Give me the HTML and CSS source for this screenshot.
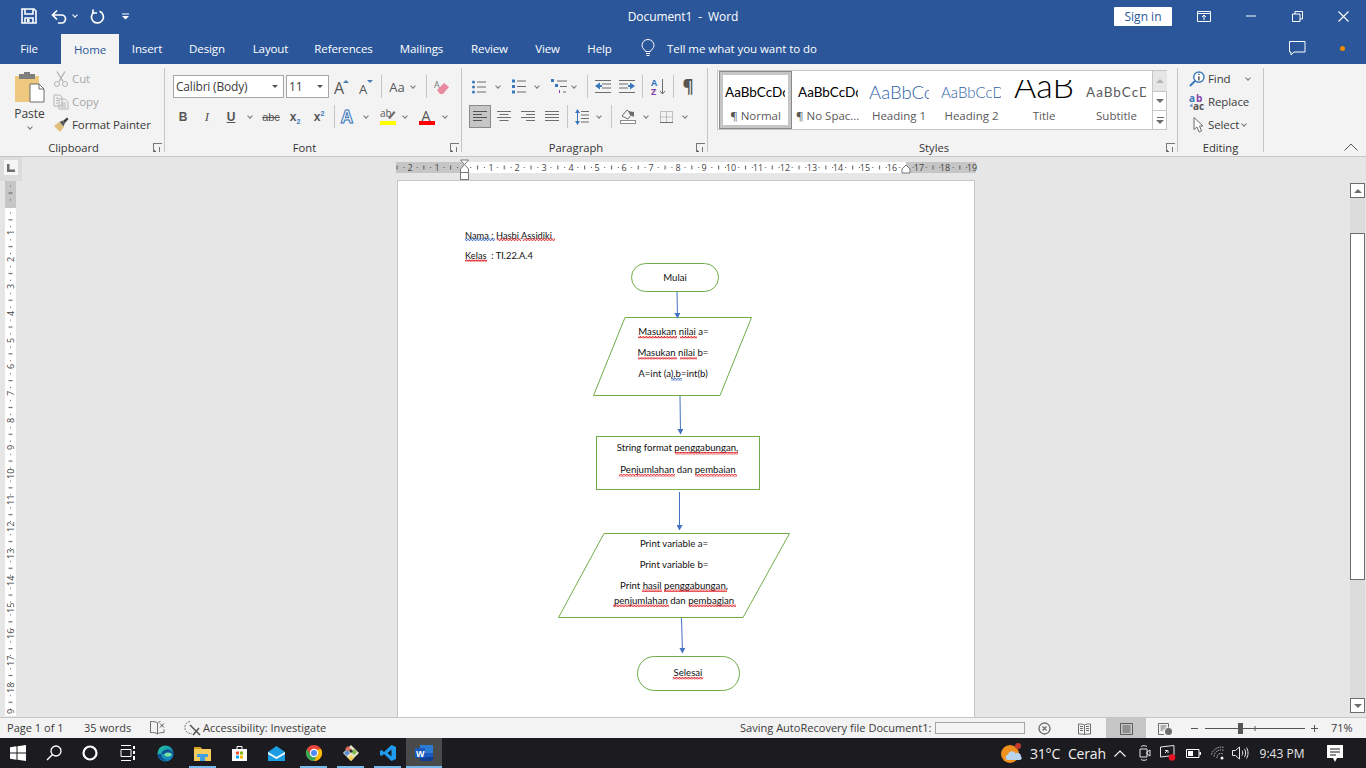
FILE: index.html
```html
<!DOCTYPE html>
<html lang="en">
<head>
    <meta charset="UTF-8">
    <meta name="viewport" content="width=device-width, initial-scale=1.0">
    <title>Document1 - Word</title>
    <link rel="stylesheet" href="styles.css">
</head>
<body>
<div class="app">

    <!-- Title bar -->
    <header class="titlebar">
        <div class="qat">
            <svg class="q-save" width="16" height="16" viewBox="0 0 16 16"><path d="M1 1h12l2 2v12H1z M4 1.5v4.5h8v-4.5 M4 15v-5h8v5" fill="none" stroke="#fff" stroke-width="1.6"/><rect x="6" y="11" width="2.5" height="3" fill="#fff"/></svg>
            <svg class="q-undo" width="16" height="15" viewBox="0 0 16 15"><path d="M2 6h8.5a4 4 0 0 1 0 8H7 M6 1.5L1.5 6 6 10.5" fill="none" stroke="#fff" stroke-width="1.7"/></svg>
            <span class="chev chev-w q-chev"></span>
            <svg class="q-redo" width="15" height="15" viewBox="0 0 15 15"><path d="M9.5 2.3A6 6 0 1 1 4 3 M3 .5V4h4" fill="none" stroke="#fff" stroke-width="1.7"/></svg>
            <svg class="q-more" width="7" height="7" viewBox="0 0 7 7"><path d="M0 .5h7v1H0z M0 3h7L3.5 6.5z" fill="#fff"/></svg>
        </div>
        <div class="doc-title">Document1&nbsp; -&nbsp; Word</div>
        <div class="win-ctrl">
            <button class="signin" type="button">Sign in</button>
            <svg class="w-display" width="14" height="11" viewBox="0 0 14 11"><path d="M.5.5h13v10H.5z M.5 2.5h13 M7 9V4 M5 6l2-2 2 2" fill="none" stroke="#fff"/></svg>
            <svg class="w-min" width="10" height="2" viewBox="0 0 10 2"><path d="M0 1h10" stroke="#fff"/></svg>
            <svg class="w-max" width="11" height="11" viewBox="0 0 11 11"><path d="M.5 3h7.5v7.5H.5z M3 3V.5h7.5V8H8" fill="none" stroke="#fff"/></svg>
            <svg class="w-close" width="11" height="11" viewBox="0 0 11 11"><path d="M.5.5l10 10 M10.5.5l-10 10" stroke="#fff" stroke-width="1.1"/></svg>
        </div>
    </header>

    <!-- Tabs -->
    <nav class="tabs">
        <span class="tab">File</span>
        <span></span>
        <span class="tab tab-active">Home</span>
        <span class="tab">Insert</span>
        <span class="tab">Design</span>
        <span class="tab">Layout</span>
        <span class="tab">References</span>
        <span class="tab">Mailings</span>
        <span class="tab">Review</span>
        <span class="tab">View</span>
        <span class="tab">Help</span>
        <div class="tell-me">
            <svg width="14" height="17" viewBox="0 0 14 17"><path d="M4.5 11.5C4 9.5 1 8.500 1 5.500a6 6 0 0 1 12 0c0 3-3 4-3.500 6z M5 13.500h4 M5.500 15.500h3" fill="none" stroke="#fff"/></svg>
            <span>Tell me what you want to do</span>
        </div>
        <svg class="comment" width="17" height="15" viewBox="0 0 17 15"><path d="M.5.500h15.500v10.500H5l-3 3v-3H.5z" fill="none" stroke="#fff"/></svg>
        <span class="notify-dot"></span>
    </nav>

    <!-- Ribbon -->
    <div class="ribbon">

        <section class="group g-clipboard">
            <div class="g-body clip-body">
                <div class="paste">
                    <svg width="29" height="31" viewBox="0 0 29 31"><path d="M0 4h24v26H0z" fill="#edc87e" rx="1"/><path d="M4 2h16v5H4z M9 0h6v3H9z" fill="#7f7f7f"/><path d="M15 12h9l5 5v13H15z" fill="#fff" stroke="#6d6d6d"/><path d="M24 12v5h5" fill="none" stroke="#6d6d6d"/></svg>
                    <span class="paste-label">Paste</span>
                    <span class="chev"></span>
                </div>
                <div class="small-col">
                    <div class="small-btn off">
                        <svg width="16" height="16" viewBox="0 0 16 16"><path d="M4 .5l6 10 M12 .5l-6 10" stroke="#b4b4b4" stroke-width="1.400" fill="none"/><circle cx="4" cy="13" r="2.500" fill="none" stroke="#b4b4b4"/><circle cx="12" cy="13" r="2.500" fill="none" stroke="#b4b4b4"/></svg>
                        <span>Cut</span>
                    </div>
                    <div class="small-btn off">
                        <svg width="16" height="16" viewBox="0 0 16 16"><path d="M1 1h6l2 2v9H1z M6 5h6l3 3v7H6z M3 4h3 M3 6.500h2 M3 9h2 M8 9h5 M8 11h5 M8 13h5" fill="#f3f3f3" stroke="#b4b4b4"/></svg>
                        <span>Copy</span>
                    </div>
                    <div class="small-btn">
                        <svg width="16" height="15" viewBox="0 0 16 15"><path d="M1 9l5-4 5 5-4 5z" fill="#e2bf7c"/><path d="M6.500 5l3-1.500 2.500 2.500L10.500 9.500z" fill="#5b5b5b"/><path d="M10 4l4-3.500 1.500 1.500L12 6z" fill="#3b3b3b"/></svg>
                        <span>Format Painter</span>
                    </div>
                </div>
            </div>
            <div class="g-label"><span>Clipboard</span><i class="launcher"></i></div>
        </section>

        <section class="group g-font">
            <div class="g-body">
                <div class="row font-r1">
                    <div class="combo"><span>Calibri (Body)</span><b class="caret"></b></div>
                    <span></span>
                    <div class="combo"><span>11</span><b class="caret"></b></div>
                    <div class="cell"><svg width="18" height="16" viewBox="0 0 18 16"><text x="0" y="15" class="ic-a">A</text><path d="M9 4l3-3 3 3z" fill="#4a7ebb"/></svg></div>
                    <div class="cell"><svg width="15" height="16" viewBox="0 0 15 16"><text x="0" y="15" class="ic-a2">A</text><path d="M8 1h6l-3 3z" fill="#4a7ebb"/></svg></div>
                    <div class="cell"><i class="sep"></i></div>
                    <div class="cell aa">Aa</div>
                    <div class="cell"><span class="chev"></span></div>
                    <div class="cell"><i class="sep"></i></div>
                    <div class="cell"><svg width="16" height="16" viewBox="0 0 16 16"><text x="0" y="9" class="ic-tiny">A</text><path d="M3 11l7-7 5 4-6 7H6z" fill="#ea8aa0"/></svg></div>
                </div>
                <div class="row font-r2">
                    <div class="cell fmt fmt-b">B</div>
                    <div class="cell fmt fmt-i">I</div>
                    <div class="cell fmt fmt-u">U</div>
                    <div class="cell"><span class="chev"></span></div>
                    <div class="cell fmt fmt-s">abc</div>
                    <div class="cell fmt fmt-x"><span>x<sub>2</sub></span></div>
                    <div class="cell fmt fmt-x"><span>x<sup>2</sup></span></div>
                    <div class="cell"><i class="sep"></i></div>
                    <div class="cell"><svg width="16" height="18" viewBox="0 0 16 18"><text x="0" y="15" class="ic-outline">A</text></svg></div>
                    <div class="cell"><span class="chev"></span></div>
                    <div class="cell cell-end"><svg width="16" height="16" viewBox="0 0 16 16"><text x="0" y="8" class="ic-ab">ab</text><path d="M8 9l6-7 1.500 1.500L10 10z" fill="#6d6d6d"/><rect y="12" width="16" height="4" fill="#ffff00"/></svg></div>
                    <div class="cell"><span class="chev"></span></div>
                    <div class="cell"><svg width="16" height="16" viewBox="0 0 16 16"><text x="2.500" y="11.500" class="ic-color">A</text><rect y="12" width="16" height="4" fill="#ff0000"/></svg></div>
                    <div class="cell"><span class="chev"></span></div>
                </div>
            </div>
            <div class="g-label"><span>Font</span><i class="launcher"></i></div>
        </section>

        <section class="group g-para">
            <div class="g-body">
                <div class="row para-r1">
                    <div class="cell"><svg width="14" height="14" viewBox="0 0 14 14"><path d="M5 2h9 M5 7h9 M5 12h9" stroke="#6d6d6d"/><circle cx="1.500" cy="2" r="1.500" fill="#3a78bd"/><circle cx="1.500" cy="7" r="1.500" fill="#3a78bd"/><circle cx="1.500" cy="12" r="1.500" fill="#3a78bd"/></svg></div>
                    <div class="cell"><span class="chev"></span></div>
                    <div class="cell"><svg width="14" height="15" viewBox="0 0 14 15"><path d="M5 2h9 M5 7.500h9 M5 13h9" stroke="#6d6d6d"/><path d="M0 .5h3v3H0z M0 6h3v3H0z M0 11.500h3v3H0z" fill="#3a78bd"/></svg></div>
                    <div class="cell"><span class="chev"></span></div>
                    <div class="cell cell-end"><svg width="16" height="15" viewBox="0 0 16 15"><path d="M6 2h10 M9 7.500h7 M12 13h3" stroke="#6d6d6d"/><path d="M0 0h3v3H0z M4 5h3v3H4z" fill="#3a78bd"/><path d="M8 11h1v3H8z" fill="#8646a8"/></svg></div>
                    <div class="cell"><span class="chev"></span></div>
                    <div class="cell"><i class="sep"></i></div>
                    <div class="cell"><svg width="16" height="13" viewBox="0 0 16 13"><path d="M0 .5h16 M7 4h9 M7 8h9 M0 12.500h16" stroke="#6d6d6d"/><path d="M0 6l5-3.500v2.500h2v2H5v2.500z" fill="#3a78bd"/></svg></div>
                    <div class="cell"><svg width="16" height="13" viewBox="0 0 16 13"><path d="M0 .5h16 M0 4h9 M0 8h9 M0 12.500h16" stroke="#6d6d6d"/><path d="M16 6l-5-3.500v2.500H9v2h2v2.500z" fill="#3a78bd"/></svg></div>
                    <div class="cell"><i class="sep"></i></div>
                    <div class="cell"><svg width="15" height="16" viewBox="0 0 15 16"><text x="0" y="7" class="ic-az ic-a-blue">A</text><text x="0" y="15.500" class="ic-az ic-z-purple">Z</text><path d="M11.500 0v15 M9 12l2.500 3 2.500-3" stroke="#6d6d6d" fill="none"/></svg></div>
                    <div class="cell"><i class="sep sep-thin"></i></div>
                    <div class="cell pil">¶</div>
                </div>
                <div class="row para-r2">
                    <div class="cell cell-on"><svg width="14" height="11" viewBox="0 0 14 11"><path d="M0 .5h14 M0 3.500h9 M0 6.500h14 M0 9.500h9" stroke="#555"/></svg></div>
                    <div class="cell"><svg width="14" height="11" viewBox="0 0 14 11"><path d="M0 .5h14 M2.500 3.500h9 M0 6.500h14 M2.500 9.500h9" stroke="#6d6d6d"/></svg></div>
                    <div class="cell"><svg width="14" height="11" viewBox="0 0 14 11"><path d="M0 .5h14 M5 3.500h9 M0 6.500h14 M5 9.500h9" stroke="#6d6d6d"/></svg></div>
                    <div class="cell"><svg width="14" height="11" viewBox="0 0 14 11"><path d="M0 .5h14 M0 3.500h14 M0 6.500h14 M0 9.500h14" stroke="#6d6d6d"/></svg></div>
                    <div class="cell"><i class="sep"></i></div>
                    <div class="cell"><svg width="14" height="16" viewBox="0 0 14 16"><path d="M6 2.500h8 M6 6h8 M6 9.500h8 M6 13h8" stroke="#6d6d6d"/><path d="M2.500 2v12" stroke="#3a78bd"/><path d="M0 4l2.500-4L5 4z M0 12l2.500 4L5 12z" fill="#3a78bd"/></svg></div>
                    <div class="cell"><span class="chev"></span></div>
                    <div class="cell"><i class="sep"></i></div>
                    <div class="cell"><svg width="16" height="15" viewBox="0 0 16 15"><path d="M2 7l5-6 5 4-4 5z" fill="none" stroke="#6d6d6d"/><path d="M8 2l6 1 0 5-4-2z" fill="#6d6d6d"/><rect x=".5" y="11.500" width="15" height="3" fill="#fff" stroke="#8c8c8c"/></svg></div>
                    <div class="cell"><span class="chev"></span></div>
                    <div class="cell"><svg width="13" height="12" viewBox="0 0 13 12"><path d="M.5.5h12v11H.5z M6.500.5v11 M.5 6h12" fill="none" stroke="#8c8c8c" stroke-dasharray="1 1"/><path d="M0 11.500h13" stroke="#6d6d6d"/></svg></div>
                    <div class="cell"><span class="chev"></span></div>
                </div>
            </div>
            <div class="g-label"><span>Paragraph</span><i class="launcher"></i></div>
        </section>

        <section class="group g-styles">
            <div class="g-body styles-body">
                <div class="gallery">
                    <div class="style-item style-on"><div class="s-preview s-normal">AaBbCcDc</div><div class="s-name">¶ Normal</div></div>
                    <div class="style-item"><div class="s-preview s-normal">AaBbCcDc</div><div class="s-name">¶ No Spac...</div></div>
                    <div class="style-item"><div class="s-preview s-h1">AaBbCc</div><div class="s-name">Heading 1</div></div>
                    <div class="style-item"><div class="s-preview s-h2">AaBbCcD</div><div class="s-name">Heading 2</div></div>
                    <div class="style-item"><div class="s-preview s-title">AaB</div><div class="s-name">Title</div></div>
                    <div class="style-item"><div class="s-preview s-sub">AaBbCcD</div><div class="s-name">Subtitle</div></div>
                    <div class="gallery-scroll">
                        <span class="gs gs-off"><b class="tri-up"></b></span>
                        <span class="gs"><b class="tri-down"></b></span>
                        <span class="gs gs-more"><b class="tri-down"></b></span>
                    </div>
                </div>
            </div>
            <div class="g-label"><span>Styles</span><i class="launcher"></i></div>
        </section>

        <section class="group g-editing">
            <div class="g-body edit-body">
                <div class="small-btn">
                    <svg width="16" height="16" viewBox="0 0 17 17"><circle cx="10.500" cy="6.500" r="5.500" fill="#fff" stroke="#3a78bd" stroke-width="1.500"/><path d="M6.500 10.500L1 16" stroke="#3a78bd" stroke-width="2.200"/><path d="M10.500 3v1.200 M10.500 5.500V10" stroke="#4d4d4d" stroke-width="1.500"/></svg>
                    <span>Find</span><span class="chev edit-chev"></span>
                </div>
                <div class="small-btn">
                    <svg width="16" height="16" viewBox="0 0 16 16"><text x="0" y="7.500" class="ic-rep ic-a-blue">a</text><text x="7" y="7.500" class="ic-rep ic-z-purple">b</text><text x="4" y="15.500" class="ic-rep ic-grey">ac</text><path d="M3.500 10L1 12h3" stroke="#3a78bd" fill="none"/></svg>
                    <span>Replace</span>
                </div>
                <div class="small-btn select-btn">
                    <svg width="12" height="16" viewBox="0 0 12 16"><path d="M1 .5v12l3-2.500 2 5 2.500-1-2-5H10z" fill="#fff" stroke="#6d6d6d"/></svg>
                    <span>Select</span><span class="chev"></span>
                </div>
            </div>
            <div class="g-label g-label-plain"><span>Editing</span></div>
        </section>

        <svg class="collapse" width="14" height="8" viewBox="0 0 14 8"><path d="M.5 7.500L7 1l6.500 6.500" fill="none" stroke="#555"/></svg>
    </div>

    <!-- Document area -->
    <main class="workspace">
        <aside class="left-col">
            <div class="corner"><span class="corner-btn"><svg width="8" height="8" viewBox="0 0 8 8"><path d="M0 0h2.500v5.500H8V8H0z" fill="#6d6d6d"/></svg></span></div>
            <svg class="v-ruler" width="11" height="535" viewBox="0 181 11 535">
                <defs>
                    <pattern id="vticks" width="10" height="26.800" x="0" y="206.400" patternUnits="userSpaceOnUse">
                        <rect x="5" y="6.200" width="1" height="1" fill="#555"/>
                        <rect x="3.500" y="13" width="4" height="1" fill="#555"/>
                        <rect x="5" y="19.800" width="1" height="1" fill="#555"/>
                    </pattern>
                </defs>
                <rect y="181" width="11" height="27" fill="#c6c6c6"/>
                <rect y="208" width="11" height="508" fill="#fff"/>
                <rect y="181" width="11" height="535" fill="url(#vticks)"/>
                <g class="ruler-num">
                    <text transform="translate(8.500 235) rotate(-90)">1</text>
                    <text transform="translate(8.500 262) rotate(-90)">2</text>
                    <text transform="translate(8.500 289) rotate(-90)">3</text>
                    <text transform="translate(8.500 316) rotate(-90)">4</text>
                    <text transform="translate(8.500 343) rotate(-90)">5</text>
                    <text transform="translate(8.500 369) rotate(-90)">6</text>
                    <text transform="translate(8.500 396) rotate(-90)">7</text>
                    <text transform="translate(8.500 423) rotate(-90)">8</text>
                    <text transform="translate(8.500 450) rotate(-90)">9</text>
                    <text transform="translate(8.500 479) rotate(-90)">10</text>
                    <text transform="translate(8.500 505) rotate(-90)">11</text>
                    <text transform="translate(8.500 532) rotate(-90)">12</text>
                    <text transform="translate(8.500 559) rotate(-90)">13</text>
                    <text transform="translate(8.500 586) rotate(-90)">14</text>
                    <text transform="translate(8.500 613) rotate(-90)">15</text>
                    <text transform="translate(8.500 639) rotate(-90)">16</text>
                    <text transform="translate(8.500 666) rotate(-90)">17</text>
                    <text transform="translate(8.500 693) rotate(-90)">18</text>
                    <text transform="translate(8.500 714) rotate(-90)">9</text>
                </g>
            </svg>
        </aside>
        <div class="doc-area">
            <svg class="h-ruler" width="580" height="24" viewBox="396 157 580 24">
                <defs>
                    <pattern id="hticks" width="26.800" height="12" x="464" y="162" patternUnits="userSpaceOnUse">
                        <rect x="6.200" y="5" width="1" height="1" fill="#555"/>
                        <rect x="13" y="3.500" width="1" height="4" fill="#555"/>
                        <rect x="19.800" y="5" width="1" height="1" fill="#555"/>
                    </pattern>
                </defs>
                <rect x="396" y="162" width="580" height="11" fill="#c6c6c6"/>
                <rect x="464" y="162" width="442" height="11" fill="#fff"/>
                <rect x="396" y="162" width="580" height="11" fill="url(#hticks)"/>
                <g class="ruler-num" text-anchor="middle">
                    <text x="410" y="171">2</text><text x="437" y="171">1</text>
                    <text x="491" y="171">1</text><text x="517" y="171">2</text><text x="544" y="171">3</text>
                    <text x="571" y="171">4</text><text x="597" y="171">5</text><text x="624" y="171">6</text>
                    <text x="651" y="171">7</text><text x="678" y="171">8</text><text x="704" y="171">9</text>
                    <text x="731" y="171">10</text><text x="758" y="171">11</text><text x="785" y="171">12</text>
                    <text x="812" y="171">13</text><text x="838" y="171">14</text><text x="865" y="171">15</text>
                    <text x="892" y="171">16</text><text x="919" y="171">17</text><text x="945" y="171">18</text>
                    <text x="972" y="171">19</text>
                </g>
                <path d="M460.500 160h8l-4 4.500 4 4.500v3.500h-8V169l4-4.500z" fill="#fff" stroke="#777"/>
                <rect x="460.500" y="172.500" width="8" height="7" fill="#fff" stroke="#777"/>
                <path d="M902 173v-4l4-4 4 4v4z" fill="#fff" stroke="#777"/>
            </svg>

            <div class="page">
                <!-- flowchart: coordinates are the ones of the window -->
                <svg class="flow" width="576" height="535" viewBox="398 181 576 535">
                    <defs>
                        <pattern id="wavyRed" width="3" height="2.400" patternUnits="userSpaceOnUse">
                            <path d="M0 2L1.500 .5 3 2" fill="none" stroke="#e0191e" stroke-width="1"/>
                        </pattern>
                        <pattern id="wavyBlue" width="3" height="2.400" patternUnits="userSpaceOnUse">
                            <path d="M0 2L1.500 .5 3 2" fill="none" stroke="#2f62c0" stroke-width="1"/>
                        </pattern>
                        <marker id="head" markerWidth="6" markerHeight="6" refX="5" refY="3" orient="auto">
                            <path d="M0 0L5.500 3 0 6z" fill="#4472c4"/>
                        </marker>
                    </defs>

                    <rect class="shape" x="631.500" y="263.500" width="87" height="28" rx="14"/>
                    <polygon class="shape" points="625,317.500 751.500,317.500 720,395.500 593.500,395.500"/>
                    <rect class="shape" x="596.500" y="436.500" width="163" height="53"/>
                    <polygon class="shape" points="604,533.500 789.500,533.500 743,617.500 558.500,617.500"/>
                    <rect class="shape" x="637.500" y="656.500" width="102" height="34" rx="17"/>

                    <path class="link" d="M677 292L677.500 318"/>
                    <path class="link" d="M680 396L680.500 434"/>
                    <path class="link" d="M679.500 492V530"/>
                    <path class="link" d="M681.500 618L682.500 653"/>

                    <text class="dt" x="465" y="238.500">Nama : Hasbi Assidiki</text>
                    <text class="dt" x="465" y="259">Kelas&nbsp; : TI.22.A.4</text>
                    <g class="dtc">
                        <text x="675" y="281">Mulai</text>
                        <text x="673.500" y="335">Masukan nilai a=</text>
                        <text x="673" y="356">Masukan nilai b=</text>
                        <text x="673" y="377">A=int (a),b=int(b)</text>
                        <text x="677.500" y="451">String format penggabungan,</text>
                        <text x="678" y="473">Penjumlahan dan pembaian</text>
                        <text x="674" y="547">Print variable a=</text>
                        <text x="674" y="568">Print variable b=</text>
                        <text x="674" y="589">Print hasil penggabungan,</text>
                        <text x="674" y="604">penjumlahan dan pembagian</text>
                        <text x="688" y="676">Selesai</text>
                    </g>

                    <g fill="url(#wavyRed)">
                        <rect x="497" y="238.500" width="24" height="2.400"/>
                        <rect x="523" y="238.500" width="32" height="2.400"/>
                        <rect x="465" y="259.500" width="22" height="2.400"/>
                        <rect x="638" y="336" width="39" height="2.400"/>
                        <rect x="680" y="336" width="17" height="2.400"/>
                        <rect x="638" y="357" width="39" height="2.400"/>
                        <rect x="680" y="357" width="17" height="2.400"/>
                        <rect x="675" y="452" width="63" height="2.400"/>
                        <rect x="619" y="474" width="56" height="2.400"/>
                        <rect x="695" y="474" width="42" height="2.400"/>
                        <rect x="642" y="589.500" width="20" height="2.400"/>
                        <rect x="664" y="589.500" width="63" height="2.400"/>
                        <rect x="613" y="604.500" width="56" height="2.400"/>
                        <rect x="689" y="604.500" width="47" height="2.400"/>
                        <rect x="673" y="677" width="30" height="2.400"/>
                    </g>
                    <g fill="url(#wavyBlue)">
                        <rect x="465" y="238.500" width="30" height="2.400"/>
                        <rect x="671" y="378" width="11" height="2.400"/>
                    </g>
                </svg>
            </div>
        </div>
        <div class="scrollbar">
            <span class="sb-btn"><b class="tri-up"></b></span>
            <span class="sb-gap-top"></span>
            <span class="sb-thumb"></span>
            <span class="sb-gap-bottom"></span>
            <span class="sb-btn"><b class="tri-down"></b></span>
        </div>
    </main>

    <!-- Status bar -->
    <footer class="statusbar">
        <div class="status-left">
            <span>Page 1 of 1</span>
            <span>35 words</span>
            <svg width="15" height="14" viewBox="0 0 15 14"><path d="M7.500 2C6 .5 3 .5.500.5v11c2.500 0 5.500 0 7 1.500V2z M7.500 2c1-1 2-1.300 3-1.500 M7.500 13c1-1 3-1.500 6.500-1.500v-3" fill="none" stroke="#6d6d6d"/><path d="M10 2.500l4 4 M14 2.500l-4 4" stroke="#555"/></svg>
            <svg width="17" height="17" viewBox="0 0 17 17"><path d="M6 1.500a6 6 0 1 0 2 12" fill="none" stroke="#6d6d6d" stroke-dasharray="2 1"/><path d="M6 5l3 3 M9 8l7 7 M15 8l-6 7" stroke="#555" stroke-width="1.500"/></svg>
            <span>Accessibility: Investigate</span>
        </div>
        <div class="status-right">
            <span>Saving AutoRecovery file Document1:</span>
            <span class="progress"></span>
            <div class="cell"><svg width="13" height="13" viewBox="0 0 13 13"><circle cx="6.500" cy="6.500" r="5.500" fill="none" stroke="#6d6d6d" stroke-width="1.300"/><path d="M4.500 4.500l4 4 M8.500 4.500l-4 4" stroke="#6d6d6d" stroke-width="1.300"/></svg></div>
            <div class="cell"><svg width="13" height="12" viewBox="0 0 13 12"><path d="M.5 1c2 0 4.500 0 6 1 1.500-1 4-1 6-1v10c-2 0-4.500 0-6 .5-1.500-.5-4-.5-6-.5z M6.500 2v9.500 M2 3.500h3 M2 5.500h3 M2 7.500h3 M8 3.500h3 M8 5.500h3 M8 7.500h3" fill="none" stroke="#6d6d6d"/></svg></div>
            <div class="cell view-on"><svg width="13" height="12" viewBox="0 0 13 12"><path d="M.5.500h12v11H.5z M2.500 3h8 M2.500 5h8 M2.500 7h8 M2.500 9h8" fill="none" stroke="#5a5a5a"/></svg></div>
            <div class="cell"><svg width="14" height="12" viewBox="0 0 14 12"><path d="M6 11.500H.5V.5h10v4 M2.500 3h6 M2.500 5h5 M2.500 7h3" fill="none" stroke="#6d6d6d"/><circle cx="10.500" cy="8.500" r="3.500" fill="#6d6d6d"/></svg></div>
            <svg class="zoom" width="139" height="21" viewBox="0 0 139 21"><path d="M7 10.500h7 M21 10.500h100 M71 8v5 M127 10.500h7 M130.500 7v7" stroke="#555" fill="none"/><rect x="54" y="5" width="5" height="11" fill="#555"/></svg>
            <span class="zoom-pct">71%</span>
        </div>
    </footer>

    <!-- Windows taskbar -->
    <div class="taskbar">
        <div class="apps">
            <div class="cell"><svg width="16" height="16" viewBox="0 0 16 16"><path d="M0 2.300l6.500-1v6.300H0z M7.500 1.200L16 0v7.600H7.500z M0 8.500h6.500v6.200L0 13.700z M7.500 8.500H16V16l-8.500-1.200z" fill="#fff"/></svg></div>
            <div class="cell"><svg width="16" height="16" viewBox="0 0 16 16"><circle cx="10" cy="6" r="5" fill="none" stroke="#fff" stroke-width="1.300"/><path d="M6.500 9.500L1 15" stroke="#fff" stroke-width="1.400"/></svg></div>
            <div class="cell"><svg width="16" height="16" viewBox="0 0 16 16"><circle cx="8" cy="8" r="6.500" fill="none" stroke="#fff" stroke-width="2.200"/></svg></div>
            <div class="cell"><svg width="16" height="16" viewBox="0 0 16 16"><path d="M1 .5h10 M1 15.500h10 M1 4.500h10v7H1z" fill="none" stroke="#fff"/><path d="M14 1v3 M14 6v3 M14 11v4" stroke="#fff" stroke-width="2"/></svg></div>
            <div class="cell"><svg width="17" height="17" viewBox="0 0 17 17"><defs><linearGradient id="edgeG" x1="0" y1="0" x2="1" y2="1"><stop offset="0" stop-color="#27c7a0"/><stop offset="1" stop-color="#0a6fc4"/></linearGradient></defs><circle cx="8.500" cy="8.500" r="8" fill="url(#edgeG)"/><path d="M16 9c0-3-3-4.500-5.500-4.500S5 6 4.500 9 7 15 10 15c-4 2-9.500-1-9.500-6" fill="#0f4f96"/><ellipse cx="11" cy="9.500" rx="3.500" ry="2" fill="#7be2a6"/></svg></div>
            <div class="cell open"><svg width="17" height="15" viewBox="0 0 17 15"><path d="M0 1h6l2 2h9v12H0z" fill="#f5cc5b"/><path d="M0 1h6l2 2H0z" fill="#d9a21b"/><path d="M3 8h11v3h-3v4H6v-4H3z" fill="#3f9fe0"/></svg></div>
            <div class="cell"><svg width="15" height="16" viewBox="0 0 15 16"><path d="M0 4h15v12H0z" fill="#fff"/><path d="M5 4V1.500h5V4" fill="none" stroke="#fff"/><path d="M4 6.500h3v3H4z" fill="#f25022"/><path d="M8 6.500h3v3H8z" fill="#7fba00"/><path d="M4 10.500h3v3H4z" fill="#00a4ef"/><path d="M8 10.500h3v3H8z" fill="#ffb900"/></svg></div>
            <div class="cell"><svg width="17" height="15" viewBox="0 0 17 15"><path d="M0 6L8.500 0 17 6v9H0z" fill="#1b9de2"/><path d="M0 6l8.500 5L17 6v2l-8.500 5L0 8z" fill="#fff"/></svg></div>
            <div class="cell open"><svg width="16" height="16" viewBox="0 0 16 16"><circle cx="8" cy="8" r="8" fill="#e8453c"/><path d="M8 16a8 8 0 0 1-7-12l4 7h6z" fill="#34a853"/><path d="M15 4a8 8 0 0 1-7 12l4-7-1-4.500z" fill="#fbbc05"/><circle cx="8" cy="8" r="3.600" fill="#4c8bf5" stroke="#fff" stroke-width="1.200"/></svg></div>
            <div class="cell open"><svg width="16" height="16" viewBox="0 0 16 16"><path d="M8 0l8 8-8 8-8-8z" fill="#e9e4c8"/><path d="M5 1l3 3-3 3-3-3z" fill="#e46b5f"/><path d="M11 4l3 3-3 3-3-3z" fill="#7fb84f"/><path d="M8 10l3 3-3 3-3-3z" fill="#f2d25a"/><path d="M4 5l3 3-3 3-3-3z" fill="#5a8fd8"/><path d="M8 4l2 2-2 2-2-2z" fill="#2c2c2c"/></svg></div>
            <div class="cell open"><svg width="16" height="16" viewBox="0 0 16 16"><path d="M11.500 0L16 2v12l-4.500 2L4 9 1.500 11 0 10V6l1.500-1L4 7z M11.500 4.500L7.500 8l4 3.500z" fill="#1f9cf0" fill-rule="evenodd"/></svg></div>
            <div class="cell open word-on"><svg width="18" height="16" viewBox="0 0 18 16"><path d="M5 0h13v16H5z" fill="#2b7cd3"/><path d="M5 8h13v4H5z" fill="#185abd"/><path d="M5 12h13v4H5z" fill="#103f91"/><path d="M0 3h10v10H0z" fill="#185abd"/><text x="1" y="11.500" class="ic-word">W</text></svg></div>
        </div>
        <div class="tray">
            <div class="cell cell-start"><svg width="22" height="20" viewBox="0 0 22 20"><circle cx="10" cy="11" r="9" fill="#f0901e"/><path d="M7 17a3 3 0 0 1 1-5.500 4 4 0 0 1 7.500-1 3.500 3.500 0 0 1 5.500 3 2 2 0 0 1-1 3.500z" fill="#b9d4ee"/><circle cx="18" cy="3" r="3" fill="#c0392b"/></svg></div>
            <span class="t-temp">31°C</span>
            <span class="t-temp">Cerah</span>
            <div class="cell"><svg width="12" height="7" viewBox="0 0 12 7"><path d="M.5 6.500L6 1l5.500 5.500" fill="none" stroke="#fff" stroke-width="1.100"/></svg></div>
            <div class="cell"><svg width="12" height="16" viewBox="0 0 12 16"><path d="M1 4h7v8H1z M8 7l3-2v6L8 9z" fill="none" stroke="#e6e6e6"/><path d="M2 1.500c1-1 5-1 6 0 M2 14.500c1 1 5 1 6 0" fill="none" stroke="#e6e6e6"/></svg></div>
            <div class="cell"><svg width="16" height="16" viewBox="0 0 16 16"><path d="M.5 2L14 .5v10L.5 12z" fill="none" stroke="#e6e6e6"/><path d="M5 8l3-3 M5 5.500h3V8" fill="none" stroke="#e6e6e6"/><circle cx="12" cy="12.500" r="3.300" fill="#e81123"/></svg></div>
            <div class="cell"><svg width="15" height="9" viewBox="0 0 15 9"><path d="M.5.500h12.500v8H.5z" fill="none" stroke="#fff"/><rect x="2" y="2" width="5" height="5" fill="#fff"/><rect x="13.500" y="3" width="1.500" height="3" fill="#fff"/></svg></div>
            <div class="cell"><svg width="14" height="13" viewBox="0 0 14 13"><path d="M.5 7.500A10 10 0 0 1 13 .5 M3 9.500A7 7 0 0 1 13 3.500 M6 11a4 4 0 0 1 6-4" fill="none" stroke="#bdbdbd" stroke-dasharray="1.500 .8"/><circle cx="11" cy="11" r="1.500" fill="#fff"/></svg></div>
            <div class="cell"><svg width="16" height="14" viewBox="0 0 16 14"><path d="M.5 4.500h3L7.500 1v12l-4-3.500h-3z" fill="none" stroke="#e6e6e6"/><path d="M10 4.500c1 1.500 1 3.500 0 5 M12.500 3c1.500 2 1.500 6 0 8 M14.500 1.500c2 3 2 8 0 11" fill="none" stroke="#e6e6e6"/></svg></div>
            <span class="t-clock">9:43 PM</span>
            <div class="cell"><svg width="20" height="17" viewBox="0 0 20 17"><path d="M2 0h16v13h-6l-2 4-2-4H2z" fill="#fff"/><path d="M5 4h10 M5 7h10 M5 10h6" stroke="#1c1c20"/></svg></div>
        </div>
    </div>
</div>
</body>
</html>
```
FILE: styles.css
```css
* {
    box-sizing: border-box;
}
html, body {
    margin: 0;
    height: 100%;
    overflow: hidden;
}
body {
    font-family: "Open Sans", "Noto Sans", sans-serif;
    font-size: 12px;
    color: #3b3b3b;
}
svg {
    display: block;
    overflow: visible;
}
.app {
    width: 1366px;
    height: 768px;
    display: flex;
    flex-direction: column;
}
.cell {
    display: flex;
    align-items: center;
    justify-content: center;
    height: 100%;
}
.cell-end {
    justify-content: flex-end;
}
.cell-start {
    justify-content: flex-start;
}

/* chevron used by every dropdown */
.chev {
    display: block;
    width: 4px;
    height: 4px;
    margin-top: -2px;
    border-right: 1px solid #777;
    border-bottom: 1px solid #777;
    transform: rotate(45deg);
}
.chev-w {
    border-color: #fff;
}
.sep {
    display: block;
    width: 1px;
    height: 23px;
    background-color: #c6c6c6;
}

/* title bar */
.titlebar {
    height: 32px;
    flex: none;
    background-color: #2b579a;
    color: #fff;
    display: grid;
    grid-template-columns: 1fr auto 1fr;
    align-items: center;
}
.qat {
    display: flex;
    align-items: center;
    padding-left: 21px;
}
.q-undo {
    margin-left: 14px;
}
.q-chev {
    margin-left: 6px;
}
.q-redo {
    margin-left: 13px;
}
.q-more {
    margin-left: 17px;
}
.doc-title {
    font-size: 12px;
    letter-spacing: -.1px;
}
.win-ctrl {
    display: flex;
    align-items: center;
    justify-content: flex-end;
    padding-right: 17px;
}
.signin {
    width: 58px;
    height: 19px;
    padding: 0;
    border: 0;
    border-radius: 1px;
    background-color: #fff;
    color: #2b579a;
    font: 12px "Open Sans", sans-serif;
}
.w-display {
    margin-left: 25px;
}
.w-min {
    margin-left: 35px;
}
.w-max {
    margin-left: 36px;
}
.w-close {
    margin-left: 35px;
}

/* tabs */
.tabs {
    height: 32px;
    flex: none;
    background-color: #2b579a;
    color: #fff;
    display: grid;
    grid-template-columns: 7px 44px 10px 58px 56px 64px 63px 83px 73px 63px 53px 51px 664px 51px 1fr;
    font-size: 11.500px;
}
.tab {
    display: flex;
    align-items: center;
    justify-content: center;
    letter-spacing: -.12px;
}
.tabs .tab:first-child {
    grid-column: 2;
}
.tabs .tab:first-child + span {
    grid-column: 3;
}
.tab-active {
    margin-top: 2px;
    background-color: #f3f3f3;
    color: #2b579a;
}
.tell-me {
    display: flex;
    align-items: center;
    gap: 12px;
    padding-left: 16px;
    letter-spacing: -.05px;
}
.comment {
    align-self: center;
}
.notify-dot {
    align-self: center;
    width: 5px;
    height: 5px;
    border-radius: 50%;
    background-color: #f08a00;
}

/* ribbon */
.ribbon {
    height: 93px;
    flex: none;
    padding-top: 4px;
    background-color: #f3f3f3;
    border-bottom: 1px solid #c6c6c6;
    display: flex;
}
.group {
    height: 84px;
    flex: none;
    border-right: 1px solid #c6c6c6;
    display: flex;
    flex-direction: column;
}
.g-clipboard {
    width: 165px;
}
.g-font {
    width: 297px;
}
.g-para {
    width: 246px;
}
.g-styles {
    width: 470px;
}
.g-editing {
    width: 86px;
}
.g-body {
    flex: 1;
    padding-top: 7px;
}
.g-label {
    height: 16px;
    margin-bottom: -3px;
    margin-top: -1px;
    display: flex;
    align-items: center;
    font-size: 11.200px;
    color: #333;
}
.g-label span {
    flex: 1;
    text-align: center;
    padding-right: 6px;
}
.g-label-plain span {
    padding-right: 0;
}
.launcher {
    display: block;
    width: 9px;
    height: 9px;
    margin-right: 2px;
    border-left: 1px solid #777;
    border-top: 1px solid #777;
    background: linear-gradient(45deg, #666 0 18%, transparent 18%), linear-gradient(to right, transparent 46%, #777 46% 58%, transparent 58%) no-repeat right bottom / 5px 5px;
}
.row {
    display: grid;
    height: 23px;
}
.font-r1 {
    grid-template-columns: 111px 2px 43px 28px 18px 12px 20px 12px 14px 18px;
    margin-left: 8px;
}
.font-r2 {
    grid-template-columns: 24px 24px 24px 14px 28px 20px 28px 3px 26px 8px 26px 18px 26px 10px;
    margin: 7px 0 0 6px;
}
.para-r1 {
    grid-template-columns: 20px 18px 24px 12px 24px 14px 12px 20px 28px 2px 30px 1px 28px;
    margin-left: 7px;
}
.para-r2 {
    grid-template-columns: 22px 26px 22px 26px 4px 26px 8px 17px 16px 20px 20px 18px;
    margin: 7px 0 0 7px;
}
.combo {
    display: flex;
    align-items: center;
    justify-content: space-between;
    padding: 0 5px 0 2px;
    border: 1px solid #a6a6a6;
    background-color: #fff;
    font-size: 12px;
    letter-spacing: -.2px;
}
.caret {
    width: 0;
    height: 0;
    border: 3px solid transparent;
    border-top: 3px solid #555;
    border-bottom: 0;
}
.aa {
    font-size: 13px;
    color: #555;
}
.fmt {
    color: #555;
    font-family: "Liberation Sans", sans-serif;
}
.fmt-b {
    font-weight: bold;
    font-size: 12px;
}
.fmt-i {
    font-style: italic;
    font-family: "Liberation Serif", serif;
    font-size: 13px;
}
.fmt-u {
    font-weight: bold;
    text-decoration: underline;
    font-size: 12px;
}
.fmt-s {
    text-decoration: line-through;
    font-size: 11px;
}
.fmt-x {
    font-weight: bold;
    font-size: 12px;
}
.fmt-x sub, .fmt-x sup {
    font-size: 7px;
    line-height: 0;
    color: #3a78bd;
}
.fmt-x sub {
    vertical-align: -3px;
}
.fmt-x sup {
    vertical-align: 5px;
}
.pil {
    font-size: 17px;
    color: #555;
    font-weight: bold;
}
.cell-on {
    background-color: #c6c6c6;
    border: 1px solid #8a8a8a;
}
.ic-a {
    font: 16px "Open Sans", sans-serif;
    fill: #555;
}
.ic-a2 {
    font: 13px "Open Sans", sans-serif;
    fill: #555;
}
.ic-tiny {
    font: 9px "Open Sans", sans-serif;
    fill: #777;
}
.ic-outline {
    font: bold 17px "Open Sans", sans-serif;
    fill: #f3f3f3;
    stroke: #3a78bd;
    stroke-width: 1;
}
.ic-ab {
    font: 10px "Open Sans", sans-serif;
    fill: #555;
}
.ic-color {
    font: 14px "Open Sans", sans-serif;
    fill: #555;
}
.ic-az {
    font: bold 9px "Open Sans", sans-serif;
}
.ic-a-blue {
    fill: #3a78bd;
}
.ic-z-purple {
    fill: #8646a8;
}
.ic-grey {
    fill: #555;
}
.ic-rep {
    font: bold 10px "Open Sans", sans-serif;
}

/* clipboard */
.clip-body {
    display: flex;
    padding: 4px 0 0 14px;
    gap: 8px;
}
.paste {
    width: 31px;
    display: flex;
    flex-direction: column;
    align-items: center;
}
.paste-label {
    margin-top: 2px;
    line-height: 17px;
}
.paste .chev {
    margin-top: 3px;
}
.small-col {
    margin-top: -5px;
}
.small-btn {
    height: 23px;
    display: flex;
    align-items: center;
    gap: 3px;
    white-space: nowrap;
    font-size: 11.500px;
    letter-spacing: -.1px;
}
.off {
    color: #a6a6a6;
}

/* style gallery */
.styles-body {
    padding: 2px 0 0 9px;
}
.gallery {
    width: 450px;
    height: 60px;
    border: 1px solid #c6c6c6;
    background-color: #fff;
    display: grid;
    grid-template-columns: 73px 71px 72px 73px 72px 73px 14px;
    padding-left: 1px;
}
.style-item {
    height: 58px;
    padding-top: 5px;
    text-align: center;
    overflow: hidden;
    border: 4px solid transparent;
}
.style-on {
    border-color: #c6c6c6;
    outline: 1px solid #8a8a8a;
    outline-offset: -1px;
}
.s-preview {
    width: 60px;
    height: 27px;
    margin: 0 2px;
    line-height: 25px;
    overflow: hidden;
    text-align: left;
    font-family: Lato, sans-serif;
    color: #000;
    white-space: nowrap;
}
.s-normal {
    font-size: 13.500px;
}
.s-h1 {
    font-size: 18.500px;
    color: #2f5fa8;
    font-weight: 300;
}
.s-h2 {
    font-size: 15px;
    color: #2f5fa8;
    font-weight: 300;
}
.s-title {
    font-size: 34px;
    font-weight: 300;
    line-height: 9px;
}
.s-sub {
    font-size: 13.500px;
    color: #5a5a5a;
    letter-spacing: 1px;
}
.s-name {
    margin-top: 1px;
    color: #595959;
    font-size: 11.500px;
    white-space: nowrap;
}
.gallery-scroll {
    display: grid;
    grid-template-rows: 21px 19px 18px;
    margin-left: -1px;
    border-left: 1px solid #c6c6c6;
}
.gs {
    display: flex;
    align-items: center;
    justify-content: center;
    border-bottom: 1px solid #c6c6c6;
}
.gs-off {
    background-color: #e6e6e6;
}
.gs-more {
    flex-direction: column;
    gap: 2px;
    border-bottom: 0;
}
.gs-more::before {
    content: "";
    width: 7px;
    height: 1px;
    background-color: #6d6d6d;
}
.tri-up, .tri-down {
    width: 0;
    height: 0;
    border: 4px solid transparent;
}
.tri-up {
    border-top: 0;
    border-bottom: 4px solid #6d6d6d;
}
.tri-down {
    border-bottom: 0;
    border-top: 4px solid #6d6d6d;
}
.gs-off .tri-up {
    border-bottom-color: #b4b4b4;
}

/* editing */
.edit-body {
    padding: 0 0 0 11px;
    margin-top: -1px;
}
.edit-chev {
    margin-left: 12px;
}
.select-btn {
    padding-left: 4px;
    gap: 3px;
}
.collapse {
    margin: 75px 0 0 80px;
    flex: none;
}

/* workspace */
.workspace {
    height: 560px;
    flex: none;
    background-color: #e6e6e6;
    display: flex;
}
.left-col {
    width: 22px;
    flex: none;
}
.corner {
    height: 24px;
    background-color: #dcdcdc;
    padding: 3px 0 0 4px;
}
.corner-btn {
    width: 14px;
    height: 15px;
    background-color: #f6f6f6;
    display: flex;
    align-items: center;
    justify-content: center;
}
.v-ruler {
    margin-left: 5px;
}
.ruler-num text {
    font: 9px "Open Sans", sans-serif;
    fill: #444;
}
.doc-area {
    flex: 1;
    min-width: 0;
    display: flex;
    flex-direction: column;
    align-items: center;
}
.h-ruler {
    flex: none;
}
.page {
    width: 576px;
    height: 536px;
    flex: none;
    background-color: #fff;
    box-shadow: 0 0 0 1px #c6c6c6;
}
.shape {
    fill: #fff;
    stroke: #70ad47;
    stroke-width: 1;
}
.link {
    fill: none;
    stroke: #4472c4;
    stroke-width: 1;
    marker-end: url(#head);
}
.dt {
    font: 9.300px Lato, "Open Sans", sans-serif;
    fill: #111;
}
.dtc text {
    font: 9.600px Lato, "Open Sans", sans-serif;
    fill: #111;
    text-anchor: middle;
}

/* scrollbar */
.scrollbar {
    width: 15px;
    height: 556px;
    flex: none;
    margin-right: 1px;
    display: flex;
    flex-direction: column;
    padding-top: 26px;
}
.sb-btn {
    height: 15px;
    flex: none;
    border: 1px solid #6d6d6d;
    background-color: #fff;
    display: flex;
    align-items: center;
    justify-content: center;
}
.sb-gap-top {
    height: 35px;
    flex: none;
    background-color: #dcdcdc;
}
.sb-thumb {
    height: 347px;
    flex: none;
    border: 1px solid #6d6d6d;
    background-color: #fff;
}
.sb-gap-bottom {
    flex: 1;
    background-color: #dcdcdc;
}

/* status bar */
.statusbar {
    height: 21px;
    flex: none;
    background-color: #f3f3f3;
    border-top: 1px solid #c6c6c6;
    display: flex;
    justify-content: space-between;
    font-size: 11px;
    letter-spacing: .02px;
    white-space: nowrap;
}
.statusbar span {
    margin-top: -2px;
}
.status-left {
    display: grid;
    grid-template-columns: 77px 66px 34px 19px auto;
    align-items: center;
    padding-left: 7px;
}
.status-right {
    display: grid;
    grid-template-columns: 195px 90px 38px 43px 40px 38px 139px 1fr;
    align-items: center;
    width: 626px;
}
.progress {
    height: 12px;
    border: 1px solid #a6a6a6;
    background-color: #f3f3f3;
}
.view-on {
    background-color: #c6c6c6;
}
.zoom-pct {
    padding-left: 8px;
}

/* taskbar */
.taskbar {
    height: 30px;
    flex: none;
    background-color: #1c1c20;
    color: #fff;
    display: flex;
    justify-content: space-between;
}
.apps {
    display: grid;
    grid-template-columns: 36px 36px 36px 39px repeat(7, 37px) 36px;
}
.open {
    margin: 0 5px;
    border-bottom: 2px solid #76b9ed;
    padding-top: 2px;
}
.word-on {
    margin: 0;
    background-color: #4a4a4a;
}
.ic-word {
    font: bold 9px "Liberation Sans", sans-serif;
    fill: #fff;
}
.tray {
    display: grid;
    grid-template-columns: 30px 38px 44px 16px 34px 12px 38px 12px 32px 52px 54px;
    align-items: center;
    width: 366px;
}
.t-temp {
    font-size: 14px;
    letter-spacing: -.2px;
    color: #f0f0f0;
}
.t-clock {
    font-size: 12px;
    text-align: center;
    color: #e6e6e6;
    white-space: nowrap;
}
```
